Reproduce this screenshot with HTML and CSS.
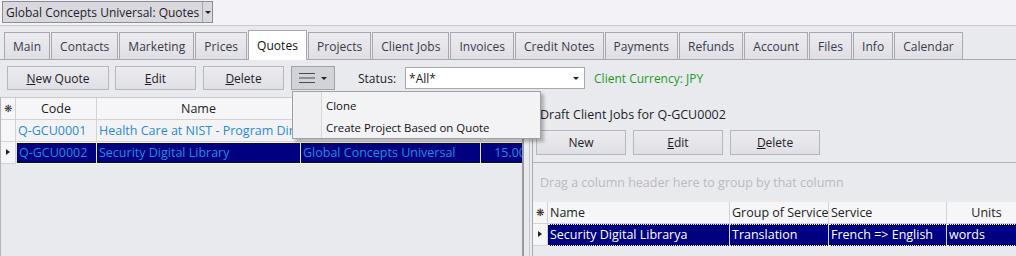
FILE: index.html
```html
<!DOCTYPE html>
<html lang="en">
  <head>
    <meta charset="utf-8">
    <title>Global Concepts Universal: Quotes</title>
    <link rel="stylesheet" href="styles.css">
  </head>
  <body>
    <!-- window selector -->
    <div class="topbar">
      <div class="combo">
        <span class="combo-text">Global Concepts Universal: Quotes</span>
        <span class="combo-arrow"></span>
      </div>
    </div>

    <div class="tabs">
      <div class="tab">Main</div>
      <div class="tab">Contacts</div>
      <div class="tab">Marketing</div>
      <div class="tab">Prices</div>
      <div class="tab active">Quotes</div>
      <div class="tab">Projects</div>
      <div class="tab">Client Jobs</div>
      <div class="tab">Invoices</div>
      <div class="tab">Credit Notes</div>
      <div class="tab">Payments</div>
      <div class="tab">Refunds</div>
      <div class="tab">Account</div>
      <div class="tab">Files</div>
      <div class="tab">Info</div>
      <div class="tab">Calendar</div>
    </div>

    <div class="toolbar">
      <button class="btn btn-new"><u>N</u>ew Quote</button>
      <button class="btn"><u>E</u>dit</button>
      <button class="btn"><u>D</u>elete</button>
      <button class="btn btn-menu pressed">
        <svg width="16" height="12" viewBox="0 0 16 12"><path d="M0 1.5h16M0 6h16M0 10.5h16" stroke="#4a4a55" stroke-width="1.2"/></svg>
        <span class="caret"></span>
      </button>
      <span class="status-label">Status:</span>
      <div class="select">
        <span>*All*</span>
        <span class="caret"></span>
      </div>
      <span class="currency">Client Currency: JPY</span>
    </div>

    <div class="split">
      <div class="left">
        <div class="grid">
          <div class="row head">
            <div class="cell ind">&#x274B;</div>
            <div class="cell c-code center">Code</div>
            <div class="cell c-name center">Name</div>
            <div class="cell c-client"></div>
            <div class="cell c-amt"></div>
          </div>
          <div class="row">
            <div class="cell ind"></div>
            <div class="cell c-code">Q-GCU0001</div>
            <div class="cell c-name">Health Care at NIST - Program Director</div>
            <div class="cell c-client">Global Concepts Universal</div>
            <div class="cell c-amt">12.00</div>
          </div>
          <div class="row selected">
            <div class="cell ind"><span class="arrow"></span></div>
            <div class="cell c-code">Q-GCU0002</div>
            <div class="cell c-name">Security Digital Library</div>
            <div class="cell c-client">Global Concepts Universal</div>
            <div class="cell c-amt">15.00</div>
          </div>
        </div>
      </div>

      <div class="splitter"></div>

      <div class="right">
        <div class="title">Draft Client Jobs for Q-GCU0002</div>
        <div class="right-buttons">
          <button class="btn">New</button>
          <button class="btn"><u>E</u>dit</button>
          <button class="btn"><u>D</u>elete</button>
        </div>
        <div class="group-panel">Drag a column header here to group by that column</div>
        <div class="grid jobs">
          <div class="row head">
            <div class="cell ind">&#x274B;</div>
            <div class="cell j-name">Name</div>
            <div class="cell j-group">Group of Services</div>
            <div class="cell j-service">Service</div>
            <div class="cell j-units center">Units</div>
          </div>
          <div class="row focused">
            <div class="cell ind"><span class="arrow"></span></div>
            <div class="cell j-name">Security Digital Librarya</div>
            <div class="cell j-group">Translation</div>
            <div class="cell j-service">French =&gt; English</div>
            <div class="cell j-units">words</div>
          </div>
        </div>
      </div>
    </div>

    <!-- dropdown of the menu button -->
    <div class="popup">
      <div class="popup-item">Clone</div>
      <div class="popup-item">Create Project Based on Quote</div>
    </div>
  </body>
</html>
```

FILE: styles.css
```css
body {
  margin: 0;
  background-color: #e9eaee;
  font-family: "Segoe UI", "Open Sans", sans-serif;
  font-size: 12px;
  color: #2a2a35;
  width: 1016px;
  height: 256px;
  overflow: hidden;
  position: relative;
}

/* top selector */
.topbar {
  height: 26px;
  background-color: #f3f3f7;
  border-bottom: 1px solid #c9c9d0;
  box-sizing: border-box;
  padding: 1px 2px;
}

.combo {
  display: inline-flex;
  align-items: center;
  height: 22px;
  box-sizing: border-box;
  border: 1px solid #8c8c94;
  background-color: #d8d8de;
  color: #1e1e28;
}

.combo-text {
  padding: 0 3px 0 3px;
}

.combo-arrow {
  width: 9px;
  height: 20px;
  border-left: 1px solid #a6a6ae;
  position: relative;
}

.combo-arrow::after,
.caret {
  content: "";
  display: inline-block;
  border-left: 3px solid transparent;
  border-right: 3px solid transparent;
  border-top: 3px solid #222;
}

.combo-arrow::after {
  position: absolute;
  left: 2px;
  top: 9px;
}

/* tabs */
.tabs {
  display: flex;
  padding: 0 0 0 4px;
  height: 34px;
  box-sizing: border-box;
  border-bottom: 1px solid #a8a8b0;
  align-items: flex-end;
  background-color: #e9eaee;
}

.tab {
  height: 27px;
  line-height: 27px;
  padding: 0 8px;
  box-sizing: border-box;
  border: 1px solid #a8a8b0;
  border-bottom: none;
  margin-right: 1px;
  background: linear-gradient(#ececf0, #dedee4);
  color: #3a3a48;
  letter-spacing: 0.05px;
}

.tab.active {
  line-height: 29px;
  background: #fff;
  color: #111;
  margin-bottom: -1px;
  height: 30px;
}

/* toolbar */
.toolbar {
  display: flex;
  align-items: center;
  padding: 6px 0 0 7px;
  height: 30px;
  box-sizing: border-box;
}

.btn {
  font: inherit;
  color: #1e1e28;
  width: 81px;
  height: 24px;
  margin-right: 7px;
  border: 1px solid #b6b6be;
  background: linear-gradient(#ebebef, #dfdfe5);
  padding: 0;
}

.btn u {
  text-decoration: underline;
}

.btn-new {
  width: 102px;
  margin-right: 6px;
}

.btn-menu {
  width: 44px;
  display: flex;
  align-items: center;
  justify-content: center;
  gap: 6px;
}

.btn.pressed {
  background: #d2d2d9;
  border-color: #a0a0a8;
}

.status-label {
  margin-left: 16px;
  margin-right: 9px;
  color: #222;
}

.select {
  width: 180px;
  height: 22px;
  box-sizing: border-box;
  background-color: #fff;
  border: 1px solid #a8a8b0;
  display: flex;
  align-items: center;
  justify-content: space-between;
  padding: 0 5px 0 3px;
  color: #222;
}

.currency {
  margin-left: 9px;
  color: #1f9b1f;
}

/* split panels */
.split {
  display: flex;
  padding-top: 7px;
  height: 167px;
  box-sizing: border-box;
  font-size: 12.5px;
}

.left {
  width: 521px;
  border-left: 1px solid #b4b4bc;
  border-right: 2px solid #9a9aa2;
  overflow: hidden;
  flex-shrink: 0;
}

.splitter {
  width: 5px;
  border-right: 1px solid #c4c4cc;
  flex-shrink: 0;
}

.right {
  flex: 1;
  border-left: 1px solid #a8a8b0;
  margin-left: 2px;
  overflow: hidden;
}

.grid {
  border-top: 1px solid #c8c8d0;
}

.row {
  display: flex;
  height: 22px;
  white-space: nowrap;
}

.cell {
  box-sizing: border-box;
  border-right: 1px solid #d2d2da;
  border-bottom: 1px solid #d2d2da;
  padding: 0 2px;
  line-height: 21px;
  overflow: hidden;
  flex-shrink: 0;
  color: #2b8ad4;
}

.center {
  text-align: center;
}

.head .cell {
  background-color: #f6f6f8;
  color: #222;
}

.cell.ind {
  width: 15px;
  background-color: #f6f6f8;
  font-size: 10px;
  text-align: center;
  padding: 0;
  color: #333;
  position: relative;
}

.arrow {
  position: absolute;
  left: 5px;
  top: 7px;
  border-top: 3.5px solid transparent;
  border-bottom: 3.5px solid transparent;
  border-left: 4px solid #222;
}

.row .cell:not(.ind) {
  background-color: #f3f3f6;
}

.head .cell:not(.ind) {
  background-color: #f6f6f8;
}

.c-code { width: 81px; }
.c-name { width: 204px; }
.c-client { width: 180px; }
.c-amt { width: 48px; text-align: right; }

.row.selected .cell:not(.ind) {
  background-color: #000080;
  color: #1e8ee0;
  border-color: #e8e8c0;
  border-top: 1px solid #ffff80;
  border-bottom: 1px solid #ffff80;
  line-height: 19px;
}

.row.selected .c-code {
  border-left: 1px solid #ffff80;
}

/* right panel */
.title {
  padding: 9px 0 0 7px;
  height: 33px;
  box-sizing: border-box;
  color: #1e1e28;
}

.right-buttons {
  display: flex;
  padding-left: 3px;
  height: 32px;
  box-sizing: border-box;
  font-size: 12px;
}

.right-buttons .btn {
  width: 90px;
  height: 25px;
}

.group-panel {
  border-top: 1px solid #b0b0b8;
  height: 40px;
  box-sizing: border-box;
  padding: 11px 0 0 7px;
  color: #b9b9c2;
}

.jobs {
  border-top: none;
}

.jobs .cell {
  color: #222;
}

.j-name { width: 182px; }
.j-group { width: 99px; }
.j-service { width: 118px; }
.j-units { width: 80px; }

.row.focused .cell:not(.ind) {
  background-color: #000080;
  color: #fff;
  border-top: 1px dotted #fff;
  border-bottom: 1px dotted #fff;
  line-height: 19px;
}

.row.focused .cell.ind {
  border-bottom: 1px solid #d2d2da;
}

/* popup menu */
.popup {
  position: absolute;
  left: 292px;
  top: 91px;
  width: 249px;
  height: 48px;
  box-sizing: border-box;
  border: 1px solid #a0a0a6;
  background: linear-gradient(to right, #f0f0f2 28px, #d8d8dc 28px, #d8d8dc 29px, #f3f3f5 29px);
  box-shadow: 3px 3px 3px rgba(0, 0, 0, 0.25);
  padding-top: 3px;
  font-size: 11.4px;
}

.popup-item {
  height: 22px;
  line-height: 21px;
  padding-left: 33px;
  color: #111;
}
```
